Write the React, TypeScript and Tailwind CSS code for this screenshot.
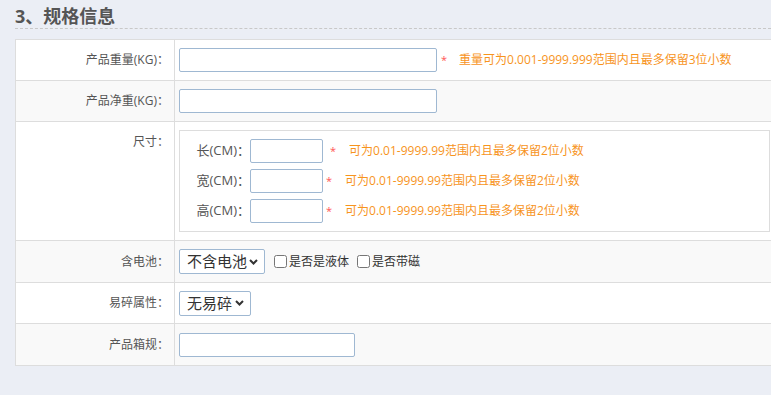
import React from "react";

const font = { fontFamily: '"Open Sans", "Noto Sans CJK SC", sans-serif' };

const Hint = ({ text }: { text: string }) => (
  <>
    <span className="ml-[4px] text-[11px] text-[#f55]">*</span>
    <span className="ml-[12px] text-[12px] text-[#f7941d]">{text}</span>
  </>
);

const Row = ({
  label,
  grey,
  top,
  h = "min-h-[40px]",
  children,
}: {
  label: string;
  grey?: boolean;
  top?: boolean;
  h?: string;
  children: React.ReactNode;
}) => (
  <div className={`flex border-t border-[#ddd] first:border-t-0 ${grey ? "bg-[#f9f9f9]" : "bg-white"}`}>
    <div
      className={`w-[159px] shrink-0 border-r border-[#ddd] pr-[5px] text-right text-[12px] text-[#555] ${
        top ? "pt-[11px]" : "flex items-center justify-end"
      }`}
    >
      {label}：
    </div>
    <div className={`flex ${h} flex-1 items-center px-[4px]`}>{children}</div>
  </div>
);

const SizeLine = ({ label, first }: { label: string; first?: boolean }) => (
  <div className="flex h-[30px] items-center">
    <span className="w-[70px] text-right text-[13px] text-[#555]">{label}：</span>
    <input className="h-[24px] w-[73px] rounded-[2px] border border-[#9fb8d2] bg-white outline-none" />
    <span className={`${first ? "ml-[7px]" : "ml-[3px]"} text-[11px] text-[#f55]`}>*</span>
    <span className="ml-[13px] text-[12px] text-[#f7941d]">可为0.01-9999.99范围内且最多保留2位小数</span>
  </div>
);

const Chevron = () => (
  <svg
    className="pointer-events-none absolute right-[7px] top-1/2 -translate-y-1/2"
    width="9"
    height="6"
    viewBox="0 0 9 6"
  >
    <path d="M1 1 L4.5 4.5 L8 1" fill="none" stroke="#333" strokeWidth="2" />
  </svg>
);

const Select = ({ value, w }: { value: string; w: string }) => (
  <div className={`relative ${w}`}>
    <select className="h-[25px] w-full appearance-none rounded-[2px] border border-[#9fb8d2] bg-white pl-[7px] text-[15px] text-[#333] outline-none">
      <option>{value}</option>
    </select>
    <Chevron />
  </div>
);

export default function App() {
  return (
    <div className="h-[395px] w-[771px] overflow-hidden bg-[#ebeef5]" style={font}>
      <div className="pl-[15px] pt-[5px]">
        <h2 className="text-[18px] font-bold leading-[22px] text-[#555]">3、规格信息</h2>
        <div className="mt-[1px] border-b border-dashed border-[#c8c8c8]" />
      </div>

      <div className="ml-[15px] mt-[10px] w-[770px] border border-[#ddd]">
        <Row label="产品重量(KG)">
          <input className="h-[24px] w-[258px] rounded-[2px] border border-[#9fb8d2] bg-white outline-none" />
          <Hint text="重量可为0.001-9999.999范围内且最多保留3位小数" />
        </Row>

        <Row label="产品净重(KG)" grey>
          <input className="h-[24px] w-[258px] rounded-[2px] border border-[#9fb8d2] bg-white outline-none" />
        </Row>

        <Row label="尺寸" top>
          <div className="my-[8px] w-[591px] border border-[#ddd] bg-white py-[5px]">
            <SizeLine label="长(CM)" first />
            <SizeLine label="宽(CM)" />
            <SizeLine label="高(CM)" />
          </div>
        </Row>

        <Row label="含电池" grey h="min-h-[41px]">
          <Select value="不含电池" w="w-[86px]" />
          <label className="ml-[9px] flex items-center text-[12px] text-[#333]">
            <input type="checkbox" className="m-0 h-[13px] w-[13px]" />
            <span className="ml-[2px]">是否是液体</span>
          </label>
          <label className="ml-[8px] flex items-center text-[12px] text-[#333]">
            <input type="checkbox" className="m-0 h-[13px] w-[13px]" />
            <span className="ml-[2px]">是否带磁</span>
          </label>
        </Row>

        <Row label="易碎属性">
          <Select value="无易碎" w="w-[72px]" />
        </Row>

        <Row label="产品箱规" grey h="min-h-[41px]">
          <input className="h-[24px] w-[176px] rounded-[2px] border border-[#9fb8d2] bg-white outline-none" />
        </Row>
      </div>
    </div>
  );
}
